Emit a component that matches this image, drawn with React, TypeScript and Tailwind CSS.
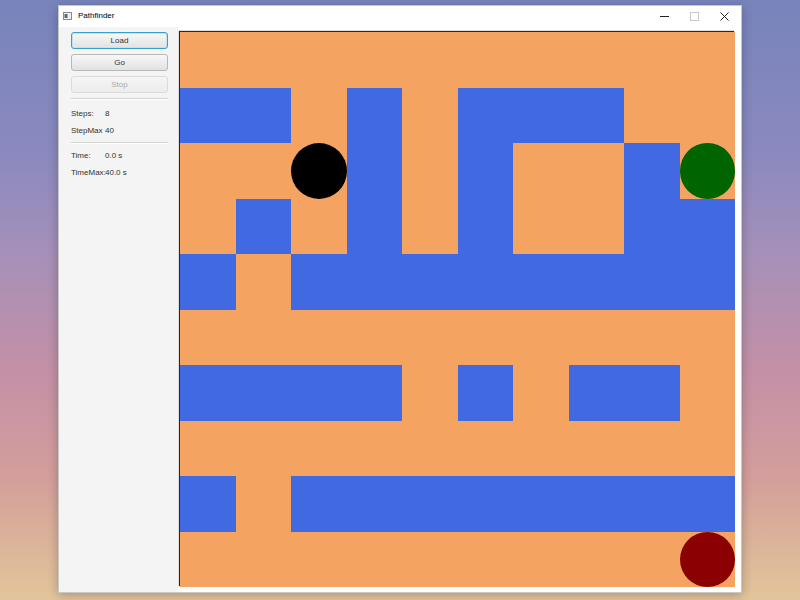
import React from 'react';

// 0 = open (orange), 1 = wall (blue)
const MAZE: number[][] = [
  [0, 0, 0, 0, 0, 0, 0, 0, 0, 0],
  [1, 1, 0, 1, 0, 1, 1, 1, 0, 0],
  [0, 0, 0, 1, 0, 1, 0, 0, 1, 0],
  [0, 1, 0, 1, 0, 1, 0, 0, 1, 1],
  [1, 0, 1, 1, 1, 1, 1, 1, 1, 1],
  [0, 0, 0, 0, 0, 0, 0, 0, 0, 0],
  [1, 1, 1, 1, 0, 1, 0, 1, 1, 0],
  [0, 0, 0, 0, 0, 0, 0, 0, 0, 0],
  [1, 0, 1, 1, 1, 1, 1, 1, 1, 1],
  [0, 0, 0, 0, 0, 0, 0, 0, 0, 0],
];

// markers placed on the board
const MARKERS: Record<string, string> = {
  '2-2': 'bg-black',
  '2-9': 'bg-[#006400]',
  '9-9': 'bg-[#8b0000]',
};

const FxButton = ({ label, focused, disabled }: { label: string; focused?: boolean; disabled?: boolean }) => (
  <button
    className={
      'w-full h-[17px] rounded-[3px] text-[8px] text-[#333] bg-gradient-to-b from-[#f8f8f8] to-[#e2e2e2] ' +
      (focused ? 'border border-[#3aa0c8] shadow-[inset_0_0_0_1px_#bfe3f0]' : 'border border-[#b8b8b8]') +
      (disabled ? ' opacity-40' : '')
    }
  >
    {label}
  </button>
);

const Stat = ({ label, value }: { label: string; value: string }) => (
  <div className="flex items-center h-[17px] text-[8px] text-[#333]">
    <span className="w-[34px]">{label}</span>
    <span>{value}</span>
  </div>
);

const Divider = () => <div className="h-[2px] border-t border-[#d4d4d4] bg-white my-[3px]" />;

const App = () => {
  return (
    <div
      className="w-[800px] h-[600px] pt-[5px] pl-[58px] bg-[linear-gradient(to_bottom,#7884bc_0%,#8a89bf_25%,#a590ba_42%,#c490a6_62%,#d49f9b_80%,#e3c59a_100%)]"
      style={{ fontFamily: '"Liberation Sans", Arial, sans-serif' }}
    >
      {/* --- WINDOW --- */}
      <div className="w-[684px] h-[588px] bg-white border border-[#c8c8c8] flex flex-col shadow-[0_2px_10px_rgba(0,0,0,0.25)]">
        {/* title bar */}
        <div className="h-[21px] flex items-center pl-[4px] pb-[1px] shrink-0">
          <svg width="9" height="8" viewBox="0 0 9 8" className="mr-[6px]">
            <rect x="0.5" y="0.5" width="8" height="7" fill="#f0f0f0" stroke="#8a8a8a" />
            <rect x="1.5" y="2" width="3" height="4" fill="#5c6a78" />
          </svg>
          <span className="text-[8px] text-black">Pathfinder</span>
          <div className="ml-auto flex items-center">
            <div className="w-[30px] flex justify-center">
              <svg width="9" height="9" viewBox="0 0 9 9">
                <line x1="0" y1="4.5" x2="9" y2="4.5" stroke="#222" strokeWidth="1" />
              </svg>
            </div>
            <div className="w-[30px] flex justify-center">
              <svg width="9" height="9" viewBox="0 0 9 9">
                <rect x="0.5" y="0.5" width="8" height="8" fill="none" stroke="#c8c8c8" />
              </svg>
            </div>
            <div className="w-[30px] flex justify-center mr-[2px]">
              <svg width="9" height="9" viewBox="0 0 9 9">
                <path d="M0.5 0.5 L8.5 8.5 M8.5 0.5 L0.5 8.5" stroke="#222" strokeWidth="1" />
              </svg>
            </div>
          </div>
        </div>

        {/* content */}
        <div className="flex-1 flex bg-[#f4f4f4]">
          {/* controls */}
          <div className="w-[119px] pl-[12px] pr-[10px] pt-[5px] flex flex-col">
            <div className="flex flex-col gap-[5px]">
              <FxButton label="Load" focused />
              <FxButton label="Go" />
              <FxButton label="Stop" disabled />
            </div>
            <div className="mt-[2px] mb-[2px]">
              <Divider />
            </div>
            <Stat label="Steps:" value="8" />
            <Stat label="StepMax" value="40" />
            <Divider />
            <Stat label="Time:" value="0.0 s" />
            <Stat label="TimeMax:" value="40.0 s" />
          </div>

          {/* board */}
          <div className="flex-1 bg-white pl-[2px] pt-[5px]">
            <div className="w-[555px] h-[555px] grid grid-cols-10 grid-rows-10 shadow-[-1px_-1px_1px_#2a2a2a]">
              {MAZE.map((row, r) =>
                row.map((cell, c) => {
                  const marker = MARKERS[`${r}-${c}`];
                  return (
                    <div key={`${r}-${c}`} className={cell ? 'bg-[#4169e1]' : 'bg-[#f4a460]'}>
                      {marker && <div className={`w-full h-full rounded-full ${marker}`} />}
                    </div>
                  );
                })
              )}
            </div>
          </div>
        </div>
      </div>
    </div>
  );
};

export default App;
